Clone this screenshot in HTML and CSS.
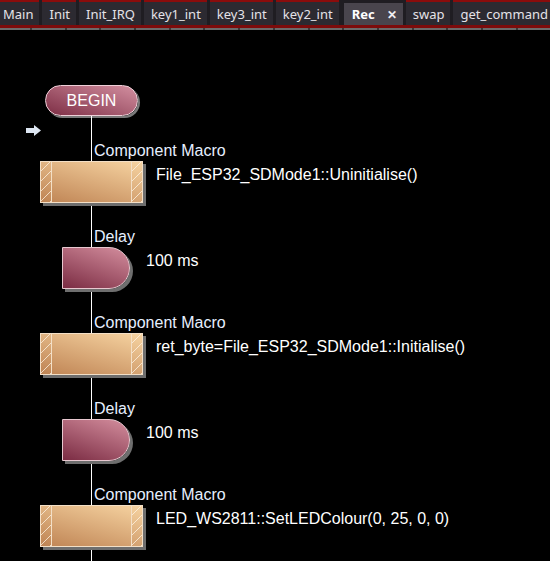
FILE: index.html
```html
<!doctype html>
<html>

<head>
	<meta charset="utf-8">
	<title>Rec</title>
	<link rel="stylesheet" href="styles.css">
</head>

<body>
	<div id="tabs">
		<span class="tab first">Main</span>
		<span class="tab">Init</span>
		<span class="tab">Init_IRQ</span>
		<span class="tab">key1_int</span>
		<span class="tab">key3_int</span>
		<span class="tab">key2_int</span>
		<span class="tab active">Rec <b class="close">&#x2715;</b></span>
		<span class="tab">swap</span>
		<span class="tab">get_command</span>
	</div>
	<div id="ruler"></div>

	<div id="canvas">
		<div class="begin">BEGIN</div>
		<div class="flow">
			<div class="arrow">
				<svg width="15" height="11" viewBox="0 0 15 11">
					<path d="M0 3H8V0L15 5.5L8 11V8H0Z" fill="#dde6f2"/>
				</svg>
			</div>

			<div class="step">
				<div class="label">Component Macro</div>
				<div class="row macro-row">
					<div class="macro"><i></i><i class="mid"></i><i></i></div>
					<span class="text">File_ESP32_SDMode1::Uninitialise()</span>
				</div>
			</div>

			<div class="step">
				<div class="label">Delay</div>
				<div class="row delay-row">
					<div class="delay"></div>
					<span class="text">100 ms</span>
				</div>
			</div>

			<div class="step">
				<div class="label">Component Macro</div>
				<div class="row macro-row">
					<div class="macro"><i></i><i class="mid"></i><i></i></div>
					<span class="text">ret_byte=File_ESP32_SDMode1::Initialise()</span>
				</div>
			</div>

			<div class="step">
				<div class="label">Delay</div>
				<div class="row delay-row">
					<div class="delay"></div>
					<span class="text">100 ms</span>
				</div>
			</div>

			<div class="step">
				<div class="label">Component Macro</div>
				<div class="row macro-row">
					<div class="macro"><i></i><i class="mid"></i><i></i></div>
					<span class="text">LED_WS2811::SetLEDColour(0, 25, 0, 0)</span>
				</div>
			</div>
		</div>
	</div>
</body>

</html>
```

FILE: styles.css
```css
* {
	margin: 0;
	padding: 0;
	box-sizing: border-box;
}

html,
body {
	height: 100%;
	overflow: hidden;
	background: #000;
}

#tabs {
	display: flex;
	gap: 3px;
	height: 25px;
	background: #1f1d22;
	font-family: "Noto Sans", sans-serif;
	font-size: 13px;
	color: #e4e2e8;
	white-space: nowrap;
	overflow: hidden;
}

.tab {
	display: flex;
	align-items: center;
	padding: 0 6px 0 7px;
	height: 25px;
	border-top: 2px solid #8a0c0c;
	background: #2c2a31;
	flex-shrink: 0;
}

.tab.first {
	margin-left: -4px;
}

.tab.active {
	margin-left: 2px;
	padding: 0 6px 0 8px;
	border-top: 3px solid #1f1d22;
	background: #49454d;
	color: #fff;
	font-weight: bold;
}

.close {
	margin-left: 12px;
	font-size: 12px;
	color: #f0eef2;
}

#ruler {
	height: 5px;
	border-top: 3px solid #7c0b0b;
	background: #6b6b6b repeating-linear-gradient(90deg, transparent 0, transparent 30px, #3a3a3a 30px, #3a3a3a 32px, transparent 32px, transparent 34.7px);
}

#canvas {
	padding-top: 55px;
	font-family: "Liberation Sans", Arial, sans-serif;
	font-size: 16px;
}

.begin {
	width: 93px;
	height: 31px;
	margin-left: 45px;
	border: 1px solid #efcfd8;
	border-radius: 16px;
	background: linear-gradient(20deg, #7d2e45, #d38fa0);
	box-shadow: 2px 2px 0 #7a7a7a;
	color: #fff;
	line-height: 29px;
	text-align: center;
}

.flow {
	height: 445px;
	overflow: hidden;
	background: linear-gradient(#fff, #fff) 91px 0 / 1px 100% no-repeat;
}

.arrow {
	height: 25px;
	padding: 9px 0 0 26px;
}

.arrow svg {
	display: block;
}

.step {
	padding-bottom: 24px;
}

.label {
	height: 17px;
	line-height: 17px;
	margin: 0 0 3px 94px;
	padding-top: 1px;
	color: #e6efff;
}

.row {
	display: flex;
	align-items: flex-start;
}

.macro-row {
	padding-left: 40px;
	gap: 13px;
}

.delay-row {
	padding-left: 62px;
	gap: 16px;
}

.text {
	color: #fff;
	padding-top: 5px;
	white-space: nowrap;
}

.macro {
	display: flex;
	width: 103px;
	height: 42px;
	border: 1px solid #f3dfc6;
	background: linear-gradient(15deg, #bf8454, #f6d3a1);
	box-shadow: 3px 3px 0 #6e6e6e;
	flex-shrink: 0;
}

.macro i {
	width: 10px;
	background: repeating-linear-gradient(135deg, transparent 0, transparent 6px, rgba(255, 245, 230, 0.75) 6px, rgba(255, 245, 230, 0.75) 7px);
}

.macro i.mid {
	flex: 1;
	background: none;
	border-left: 1px solid #f3dfc6;
	border-right: 1px solid #f3dfc6;
}

.delay {
	width: 68px;
	height: 42px;
	border: 1px solid #e8c8d0;
	border-radius: 0 21px 21px 0;
	background: linear-gradient(20deg, #7b2c43, #d48e9e);
	box-shadow: 3px 3px 0 #6e6e6e;
	flex-shrink: 0;
}
```
